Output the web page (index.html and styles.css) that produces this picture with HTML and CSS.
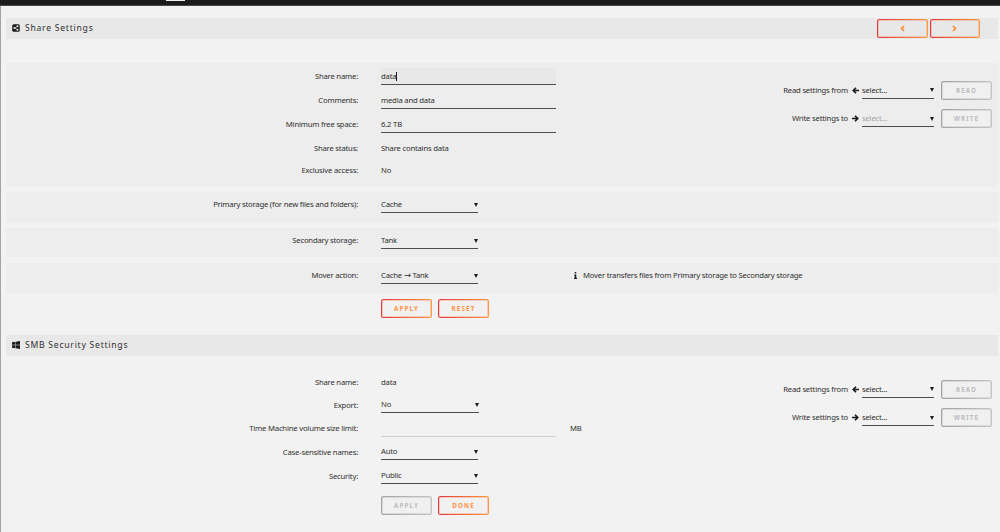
FILE: index.html
```html
<!DOCTYPE html>
<html lang="en">
<head>
<meta charset="utf-8">
<title>Share Settings</title>
<link rel="stylesheet" href="styles.css">
</head>
<body>
<header class="topbar"><span class="active-tab"></span></header>
<main class="page">
  <div class="title">
    <svg class="title-icon" viewBox="0 0 16 16"><rect x="0.5" y="0.5" width="15" height="15" rx="3" fill="#1c1b1b"/><path d="M11 4.5 5 8l6 3.5" fill="none" stroke="#e8e8e8" stroke-width="1.3"/><circle cx="11" cy="4.6" r="2" fill="#e8e8e8"/><circle cx="5" cy="8" r="2" fill="#e8e8e8"/><circle cx="11" cy="11.4" r="2" fill="#e8e8e8"/></svg>
    <span class="title-text">Share Settings</span>
    <span class="nav"><button class="btn"><svg class="chev" viewBox="0 0 10 14"><path d="M8 2 3 7l5 5"/></svg></button><button class="btn"><svg class="chev" viewBox="0 0 10 14"><path d="m2 2 5 5-5 5"/></svg></button></span>
  </div>

  <section class="panel share">
    <div class="form">
      <div class="row"><span class="label">Share name:</span><span class="input focus">data<i class="caret"></i></span></div>
      <div class="row"><span class="label">Comments:</span><span class="input">media and data</span></div>
      <div class="row"><span class="label">Minimum free space:</span><span class="input">6.2 TB</span></div>
      <div class="row"><span class="label">Share status:</span><span>Share contains data</span></div>
      <div class="row short"><span class="label">Exclusive access:</span><span>No</span></div>
    </div>
    <div class="clone">
      <div class="clone-row"><span class="clone-label">Read settings from</span><svg class="arrow" viewBox="0 0 14 14"><path d="M8 1.500 2.500 7 8 12.500M3 7h11"/></svg><span class="select">select...<i class="tri"></i></span><button class="btn off">READ</button></div>
      <div class="clone-row"><span class="clone-label">Write settings to</span><svg class="arrow" viewBox="0 0 14 14"><path d="M6 1.500 11.500 7 6 12.500M0 7h11"/></svg><span class="select low dim">select...<i class="tri"></i></span><button class="btn off">WRITE</button></div>
    </div>
  </section>

  <section class="panel single"><div class="row"><span class="label">Primary storage (for new files and folders):</span><span class="select">Cache<i class="tri"></i></span></div></section>
  <section class="panel single"><div class="row"><span class="label">Secondary storage:</span><span class="select">Tank<i class="tri"></i></span></div></section>
  <section class="panel single"><div class="row"><span class="label">Mover action:</span><span class="select"><span>Cache <span class="to">→</span> Tank</span><i class="tri"></i></span><span class="hint"><svg class="info" viewBox="0 0 6 14"><path d="M1.500 0h3v3h-3zM.500 5h4v6.500H6V14H0v-2.500h1.500v-4H.500z"/></svg>Mover transfers files from Primary storage to Secondary storage</span></div></section>
  <div class="actions"><button class="btn">APPLY</button><button class="btn">RESET</button></div>

  <div class="title smb-title">
    <svg class="title-icon" viewBox="0 0 16 16"><path fill="#1c1b1b" d="M0 2.400 6.700 1.500v6H0zM7.600 1.300 16 0v7.500H7.600zM0 8.400h6.700v6L0 13.500zM7.600 8.400H16V16l-8.400-1.300z"/></svg>
    <span class="title-text">SMB Security Settings</span>
  </div>
  <section class="smb">
    <div class="form">
      <div class="row r1"><span class="label">Share name:</span><span>data</span></div>
      <div class="row r2"><span class="label">Export:</span><span class="select export">No<i class="tri"></i></span></div>
      <div class="row r3"><span class="label">Time Machine volume size limit:</span><span class="input disabled"></span><span class="unit">MB</span></div>
      <div class="row r4"><span class="label">Case-sensitive names:</span><span class="select">Auto<i class="tri"></i></span></div>
      <div class="row r5"><span class="label">Security:</span><span class="select">Public<i class="tri"></i></span></div>
    </div>
    <div class="clone">
      <div class="clone-row"><span class="clone-label">Read settings from</span><svg class="arrow" viewBox="0 0 14 14"><path d="M8 1.500 2.500 7 8 12.500M3 7h11"/></svg><span class="select">select...<i class="tri"></i></span><button class="btn off">READ</button></div>
      <div class="clone-row"><span class="clone-label">Write settings to</span><svg class="arrow" viewBox="0 0 14 14"><path d="M6 1.500 11.500 7 6 12.500M0 7h11"/></svg><span class="select low">select...<i class="tri"></i></span><button class="btn off">WRITE</button></div>
    </div>
  </section>
  <div class="actions smb-actions"><button class="btn off">APPLY</button><button class="btn">DONE</button></div>
</main>
</body>
</html>
```
FILE: styles.css
```css
* { box-sizing: border-box; }
body {
  margin: 0;
  height: 532px;
  overflow: hidden;
  background: #f2f2f2;
  color: #303030;
  font: 7.7px/12px "Noto Sans", "Open Sans", sans-serif;
  letter-spacing: -0.2px;
}
.topbar { height: 6px; background: #1b1b1b; border-bottom: 1px solid #4a4848; padding-left: 166px; }
.active-tab { display: block; width: 19px; height: 1px; background: #f2f2f2; }
.page { height: 526px; border-left: 1px solid #a3a3a3; padding: 12px 2px 0 5px; }

.title { display: flex; align-items: center; height: 21px; padding: 0 18px 1px 6px; background: #e8e8e8; }
.title-icon { width: 8px; height: 8px; margin-right: 5px; }
.title-text { font-size: 8.6px; letter-spacing: 0.75px; }
.nav { display: flex; gap: 2px; margin: 1px 0 0 auto; }
.nav .btn { width: 50.5px; }
.chev { display: block; width: 5px; height: 7px; margin: 0 auto; fill: none; stroke: #ff8c2f; stroke-width: 3.4; }

.btn {
  width: 51px;
  height: 19px;
  padding: 0;
  border: 1px solid transparent;
  border-radius: 2.5px;
  background: linear-gradient(#f1f1f1, #f1f1f1) padding-box, linear-gradient(90deg, #e2383f, #ff9a3c) border-box;
  box-shadow: inset 0 0 0 1px rgba(245, 115, 65, 0.3);
  color: #ff9145;
  font: bold 6.3px/15px "Noto Sans", sans-serif;
  letter-spacing: 1.1px;
}
.nav .btn { background: linear-gradient(#e8e8e8, #e8e8e8) padding-box, linear-gradient(90deg, #e2383f, #ff9a3c) border-box; }
.btn.off {
  color: #bdbdbd;
  background: linear-gradient(#f0f0f0, #f0f0f0) padding-box, linear-gradient(90deg, #a2a2a2, #c6c6c6) border-box;
  box-shadow: inset 0 0 0 1px rgba(170, 170, 170, 0.3);
}

.panel { background: #ededed; }
.share { display: flex; height: 124px; margin-top: 24px; padding-top: 1px; }
.form { width: 770px; }
.row { display: flex; align-items: center; height: 24px; white-space: nowrap; }
.row.short { height: 20px; }
.label { width: 352px; margin-right: 23px; text-align: right; }

.input { align-self: flex-start; display: flex; align-items: center; width: 175px; height: 17px; margin-top: 4px; border-bottom: 1px solid #4d4d4d; }
.focus { background: #e8e8e8; }
.caret { width: 1px; height: 9px; background: #1c1b1b; }
.disabled { border-color: #cfcfcf; }
.select { display: flex; align-items: center; justify-content: space-between; width: 97px; height: 16px; border-bottom: 1px solid #4d4d4d; line-height: 15px; }
.tri { border: 2px solid transparent; border-top: 4px solid #1c1b1b; border-bottom: 0; }
.to { font-family: "DejaVu Sans", sans-serif; font-size: 8.5px; line-height: 1; }

.clone { padding-top: 17px; }
.clone-row { display: flex; align-items: center; height: 19px; margin-bottom: 9px; }
.clone-label { width: 72px; height: 14px; text-align: right; white-space: nowrap; }
.arrow { width: 7px; height: 7px; margin: 0 3px 0 4px; fill: none; stroke: #1c1b1b; stroke-width: 3.4; }
.clone .select { width: 72px; margin-right: 7px; }
.clone .low { padding-top: 1px; }
.dim { color: #a5a5a5; }

.single { height: 30px; margin-top: 5px; }
.single + .single { margin-top: 6px; }
.single:nth-of-type(3) { height: 29px; }
.single .row { height: 25px; }
.single .label, .single .hint, .r5 .label { padding-bottom: 1px; }
.single .select { margin-top: 1px; }
.hint { display: flex; align-items: center; margin-left: 96px; }
.info { width: 3px; height: 7px; margin-right: 6px; fill: #1c1b1b; }
.actions { display: flex; gap: 6px; margin: 6px 0 0 375px; }

.smb-title { margin-top: 17px; }
.smb { display: flex; height: 132px; padding-top: 14px; }
.smb .r2 { height: 22px; }
.smb .export { width: 98px; }
.unit { margin-left: 14px; }
.smb .clone { padding-top: 10px; }
.smb-actions { margin-top: 8px; }
```
